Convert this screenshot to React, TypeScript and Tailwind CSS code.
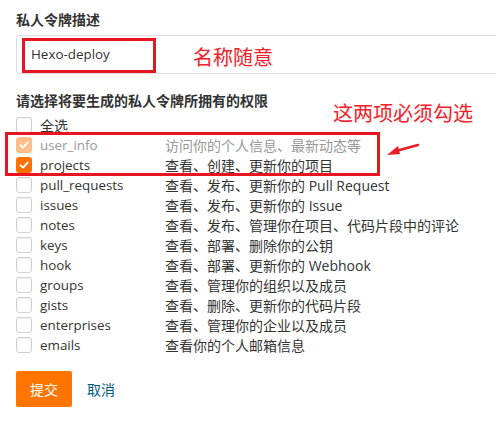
import React from 'react';

const scopes = [
  { name: 'user_info', desc: '访问你的个人信息、最新动态等', checked: true, disabled: true },
  { name: 'projects', desc: '查看、创建、更新你的项目', checked: true },
  { name: 'pull_requests', desc: '查看、发布、更新你的 Pull Request' },
  { name: 'issues', desc: '查看、发布、更新你的 Issue' },
  { name: 'notes', desc: '查看、发布、管理你在项目、代码片段中的评论' },
  { name: 'keys', desc: '查看、部署、删除你的公钥' },
  { name: 'hook', desc: '查看、部署、更新你的 Webhook' },
  { name: 'groups', desc: '查看、管理你的组织以及成员' },
  { name: 'gists', desc: '查看、删除、更新你的代码片段' },
  { name: 'enterprises', desc: '查看、管理你的企业以及成员' },
  { name: 'emails', desc: '查看你的个人邮箱信息' },
];

function Box({ checked, disabled }: { checked?: boolean; disabled?: boolean }) {
  if (checked) {
    return (
      <span
        className={
          'w-4 h-4 rounded-[3px] flex items-center justify-center shrink-0 ' +
          (disabled ? 'bg-[#ffbd8a]' : 'bg-[#ff7000]')
        }
      >
        <svg width="10" height="10" viewBox="0 0 10 10">
          <path d="M1.5 5.2 L4 7.6 L8.6 2.6" fill="none" stroke="white" strokeWidth="1.9" strokeLinecap="round" strokeLinejoin="round" />
        </svg>
      </span>
    );
  }
  return <span className="w-4 h-4 rounded-[3px] border border-[#cfcfcf] bg-white shrink-0 shadow-[inset_0_1px_1px_rgba(0,0,0,0.05)]" />;
}

const redText = 'absolute text-[#f0212b] text-[20px] leading-none [text-shadow:0_0_2px_#fff,0_0_3px_#fff,1px_1px_2px_#ddd]';

export default function App() {
  return (
    <div
      className="relative w-[496px] h-[434px] bg-white text-[#333] text-[14px] overflow-hidden"
      style={{ fontFamily: '"Open Sans", "Noto Sans CJK SC", sans-serif' }}
    >
      <div className="pl-4 pt-[10px]">
        <div className="font-bold leading-[20px]">私人令牌描述</div>
        <div className="mt-[5px] h-[39px] w-[500px] border border-[#dedde3] rounded-[3px] flex items-center pl-[14px] text-[#333] text-[13.4px]">
          Hexo-deploy
        </div>

        <div className="mt-[17px] font-bold leading-[20px]">请选择将要生成的私人令牌所拥有的权限</div>

        <div className="mt-[4px] flex flex-col">
          <label className="h-[20px] flex items-center">
            <Box />
            <span className="ml-2">全选</span>
          </label>
          {scopes.map((s) => (
            <label key={s.name} className={'h-[20px] flex items-center ' + (s.disabled ? 'text-[#999]' : '')}>
              <Box checked={s.checked} disabled={s.disabled} />
              <span className="ml-2 w-[125px] text-[13.4px]">{s.name}</span>
              <span>{s.desc}</span>
            </label>
          ))}
        </div>

        <div className="mt-[16px] flex items-center">
          <button className="w-[56px] h-[36px] bg-[#ff7500] text-white rounded-[2px]">提交</button>
          <a className="ml-[15px] text-[#005980]">取消</a>
        </div>
      </div>

      {/* annotations */}
      <div className="absolute left-[22px] top-[38px] w-[134px] h-[35px] border-[3px] border-[#e8141f]" />
      <div className={redText + ' left-[193px] top-[48px]'}>名称随意</div>
      <div className={redText + ' left-[333px] top-[104px]'}>这两项必须勾选</div>
      <div className="absolute left-[5px] top-[132px] w-[375px] h-[44px] border-[3px] border-[#e8141f]" />
      <svg className="absolute left-[384px] top-[140px]" width="40" height="20" viewBox="0 0 40 20">
        <path d="M34 5 L12 11" stroke="#ea1c24" strokeWidth="2.5" strokeLinecap="round" />
        <path d="M3 15 L14 6 L16 14 Z" fill="#ea1c24" />
      </svg>
    </div>
  );
}
